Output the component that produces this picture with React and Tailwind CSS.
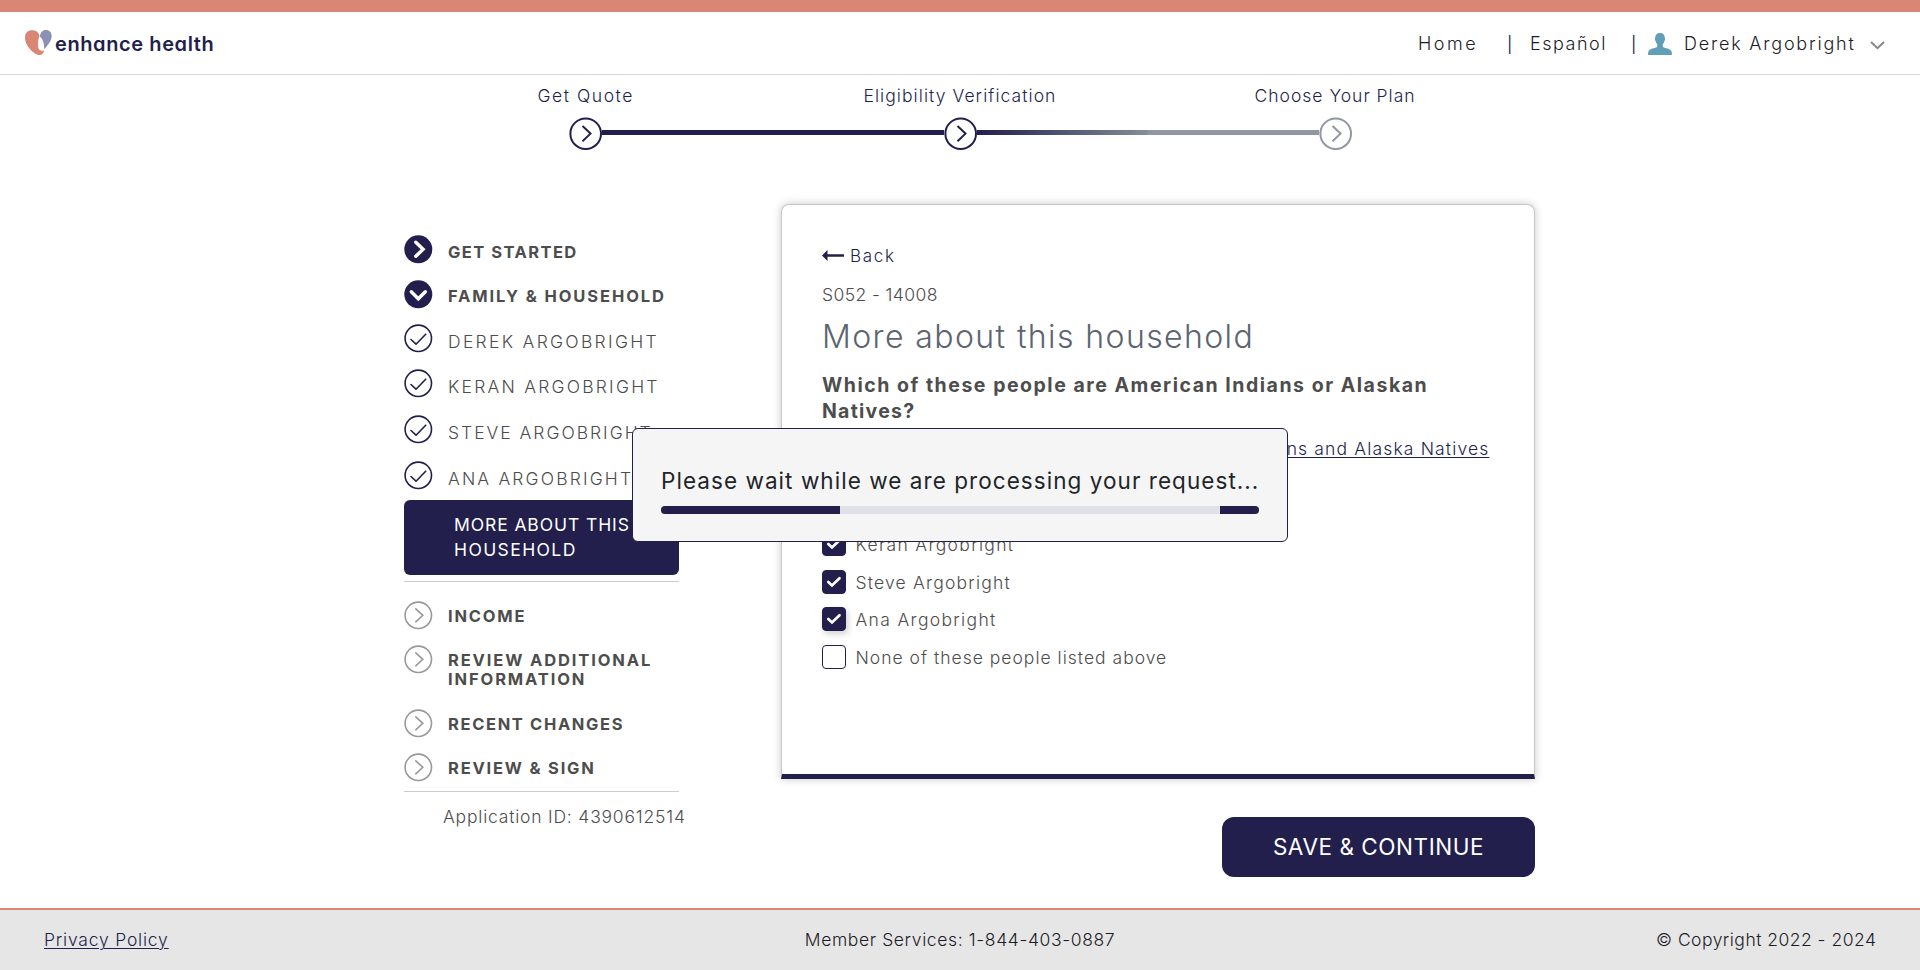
const NAVY = "#221f4d";

function Logo() {
  return (
    <div className="flex items-start">
      <svg width="27" height="25" viewBox="75 90 80 74">
        <path d="M118 107 C115 96 107 91 96 91 C83 91 75 99 75 112 C75 132 92 155 112 163 C122 166 131 162 131 150 C126 153 114 152 114 138 C113 126 115 115 118 107Z" fill="#da8675" />
        <path d="M119 109 C121 97 127 90 137 90 C148 90 154 97 154 108 C154 122 143 135 132 147 C132 130 128 116 119 109Z" fill="#8b90b5" />
      </svg>
      <span className="ml-[3px] mt-[2px] text-[20px] leading-[24px] font-semibold tracking-[0.600px] text-[#221f4d] [font-feature-settings:'cv11']">
        enhance health
      </span>
    </div>
  );
}

function Header() {
  return (
    <header className="flex h-[63px] items-start justify-between border-b border-[#d6d8da] bg-white pl-[25px] pr-[35px] text-[18px] leading-[24px] font-light text-[#1c1c28]">
      <div className="mt-[18px]">
        <Logo />
      </div>
      <nav className="flex pt-[20px]">
        <a className="w-[89px] tracking-[2.500px]">Home</a>
        <span className="w-[23px] text-[16px] text-[#221f4d] font-normal">|</span>
        <a className="w-[101px] tracking-[1.500px]">Español</a>
        <span className="w-[17px] text-[16px] text-[#221f4d] font-normal">|</span>
        <svg className="mt-px" width="24" height="22" viewBox="0 0 24 22" fill="#619fb9">
          <path d="M12 0C8.700 0 7.100 2 7.200 5c-.7.5-.3 2.300.4 3 .3 1.500.9 2.500 1.600 3.200v2.300C9.200 15 3 15.200 1 17.500 0 18.800 0 22 0 22h24s0-3.200-1-4.500C21 15.200 14.800 15 14.800 13.500v-2.300c.7-.7 1.300-1.700 1.600-3.200.7-.7 1.100-2.500.4-3C16.900 2 15.300 0 12 0z" />
        </svg>
        <a className="ml-[12px] w-[186px] tracking-[1.800px]">Derek Argobright</a>
        <svg className="mt-[9px]" width="15" height="9" viewBox="0 0 15 9" fill="none" stroke="#858585" strokeWidth="1.900">
          <path d="M1 1l6.500 6.300L14 1" />
        </svg>
      </nav>
    </header>
  );
}

function StepCircle({ color }) {
  return (
    <svg width="33" height="33" viewBox="0 0 33 33" fill="none" stroke={color} strokeWidth="2">
      <circle cx="16.700" cy="16.700" r="15.300" />
      <path d="M13.500 9l8 7.600-8 7.600" />
    </svg>
  );
}

function Stepper() {
  return (
    <section className="h-[129px] pt-[9px] text-[17.500px] leading-[24px] font-light text-[#221f4d]">
      <div className="flex pl-[537.500px]">
        <span className="w-[326px] tracking-[1.550px]">Get Quote</span>
        <span className="w-[391px] tracking-[1.060px]">Eligibility Verification</span>
        <span className="tracking-[1px]">Choose Your Plan</span>
      </div>
      <div className="mt-[9px] ml-[569px] flex w-[783px] items-start">
        <StepCircle color={NAVY} />
        <div className="mt-[13px] h-[5px] flex-1 bg-[#221f4d]" />
        <StepCircle color={NAVY} />
        <div className="mt-[13px] flex h-[5px] flex-1">
          <div className="w-1/2 bg-linear-to-r from-[#221f4d] to-[#868e96]" />
          <div className="w-1/2 bg-[#9097a3]" />
        </div>
        <StepCircle color="#9097a3" />
      </div>
    </section>
  );
}

function NavIcon({ kind }) {
  const box = { width: 29, height: 29, viewBox: "0 0 29 29", fill: "none", className: "shrink-0" };
  if (kind === "right" || kind === "down") {
    return (
      <svg {...box}>
        <circle cx="14.300" cy="14.300" r="14" fill={NAVY} />
        <path
          d={kind === "right" ? "M11.800 7.300l7.300 7-7.300 7" : "M7.300 11.800l7 7 7-7"}
          stroke="#fff"
          strokeWidth="3.400"
          strokeLinecap="round"
        />
      </svg>
    );
  }
  if (kind === "check") {
    return (
      <svg {...box} stroke={NAVY} strokeWidth="1.600" strokeLinecap="round" strokeLinejoin="round">
        <circle cx="14.300" cy="14.300" r="13.200" />
        <path d="M7 15.500l5 4.700 9.700-10" />
      </svg>
    );
  }
  return (
    <svg {...box} stroke="#999" strokeWidth="1.600" strokeLinecap="round">
      <circle cx="14.300" cy="14.300" r="13.200" />
      <path d="M11.800 7.800l7 6.500-7 6.500" />
    </svg>
  );
}

function NavRow({ kind, className, text, children }) {
  return (
    <div className={`flex items-start ${className}`}>
      <NavIcon kind={kind} />
      <span className={`ml-[15px] whitespace-nowrap leading-[19px] ${text}`}>{children}</span>
    </div>
  );
}

const BOLD = "text-[16.500px] font-bold text-[#4d4d4d]";
const THIN = "text-[17.500px] font-light text-[#4d4d4d]";

function Sidebar() {
  return (
    <aside className="ml-[404px] w-[275px] pt-[31px]">
      <NavRow kind="right" className="h-[45px]" text={`pt-[8px] tracking-[1.450px] ${BOLD}`}>GET STARTED</NavRow>
      <NavRow kind="down" className="h-[44px]" text={`pt-[7px] tracking-[1.900px] ${BOLD}`}>FAMILY &amp; HOUSEHOLD</NavRow>
      <NavRow kind="check" className="h-[45px]" text={`pt-[8px] tracking-[2.300px] ${THIN}`}>DEREK ARGOBRIGHT</NavRow>
      <NavRow kind="check" className="h-[46px]" text={`pt-[8px] tracking-[2.220px] ${THIN}`}>KERAN ARGOBRIGHT</NavRow>
      <NavRow kind="check" className="h-[46px]" text={`pt-[8px] tracking-[1.980px] ${THIN}`}>STEVE ARGOBRIGHT</NavRow>
      <NavRow kind="check" className="h-[39px]" text={`pt-[8px] tracking-[2.150px] ${THIN}`}>ANA ARGOBRIGHT</NavRow>
      <div className="flex h-[75px] flex-col rounded-md bg-[#221f4d] pt-[12px] pl-[50px] text-[17.500px] leading-[25px] text-white">
        <span className="tracking-[0.900px]">MORE ABOUT THIS</span>
        <span className="tracking-[1.400px]">HOUSEHOLD</span>
      </div>
      <div className="mt-[6px] border-t border-[#ccc] pt-[19px]">
        <NavRow kind="todo" className="h-[44px]" text={`pt-[6px] tracking-[1.800px] ${BOLD}`}>INCOME</NavRow>
        <NavRow kind="todo" className="h-[64px]" text={`pt-[6px] tracking-[1.880px] ${BOLD}`}>
          REVIEW ADDITIONAL
          <br />
          INFORMATION
        </NavRow>
        <NavRow kind="todo" className="h-[44px]" text={`pt-[6px] tracking-[1.640px] ${BOLD}`}>RECENT CHANGES</NavRow>
        <NavRow kind="todo" className="h-[38px]" text={`pt-[6px] tracking-[1.800px] ${BOLD}`}>REVIEW &amp; SIGN</NavRow>
      </div>
      <div className="border-t border-[#ccc] pt-[13px] pl-[39px] text-[17.500px] leading-[24px] font-light whitespace-nowrap tracking-[0.800px] text-[#4d4d4d]">
        Application ID: 4390612514
      </div>
    </aside>
  );
}

function CheckRow({ checked, focused, className, children }) {
  return (
    <label className={`flex h-[37.600px] items-start text-[17.500px] leading-[24px] font-light whitespace-nowrap text-[#4d4d4d] ${className}`}>
      <span
        className={`mr-[9.500px] flex size-[24px] shrink-0 items-center justify-center rounded border border-[#221f4d] ${checked ? "bg-[#221f4d]" : "bg-white"} ${focused ? "shadow-[2px_3px_6px_rgba(0,0,0,0.180)]" : ""}`}
      >
        {checked && (
          <svg width="16" height="12" viewBox="0 0 16 12" fill="none" stroke="#fff" strokeWidth="2.700">
            <path d="M2.300 6l3.700 3.500 7.500-7.200" strokeLinecap="round" />
          </svg>
        )}
      </span>
      <span className="pt-[1px]">{children}</span>
    </label>
  );
}

function Card() {
  return (
    <section className="h-[575px] w-[754px] rounded-t-lg border border-b-[5px] border-[#c8c8c8] border-b-[#221f4d] bg-white pl-[40px] shadow-[0_0_8px_rgba(0,0,0,0.220)]">
      <a className="flex items-start pt-[39px] text-[17px] leading-[24px] font-light tracking-[1.700px] text-[#221f4d]">
        <svg className="mt-[6px] mr-[6px]" width="22" height="12" viewBox="0 0 22 12" fill={NAVY}>
          <path d="M0 5.500L5.500 0V4.300H22V6.700H5.500V11Z" />
        </svg>
        Back
      </a>
      <div className="mt-[15px] text-[17.500px] leading-[24px] font-light tracking-[0.400px] text-[#4d4d4d]">S052 - 14008</div>
      <h1 className="mt-[10px] text-[32px] leading-[40px] font-light tracking-[1.400px] text-[#5b6470]">More about this household</h1>
      <h2 className="mt-[15px] text-[19.500px] leading-[26px] font-bold text-[#4d4d4d]">
        <span className="tracking-[1.520px]">Which of these people are American Indians or Alaskan</span>
        <br />
        <span className="tracking-[1.250px]">Natives?</span>
      </h2>
      <div className="mt-[13px] flex justify-end pr-[44.500px] text-[17.500px] leading-[24px] font-light tracking-[1.150px] text-[#221f4d]">
        <a className="underline decoration-1 underline-offset-2">American Indians and Alaska Natives</a>
      </div>
      <div className="mt-[33.400px]">
        <CheckRow checked className="tracking-[1.320px]">Derek Argobright</CheckRow>
        <CheckRow checked className="tracking-[1.320px]">Keran Argobright</CheckRow>
        <CheckRow checked className="tracking-[1.200px]">Steve Argobright</CheckRow>
        <CheckRow checked focused className="tracking-[1.330px]">Ana Argobright</CheckRow>
        <CheckRow className="tracking-[1.010px]">None of these people listed above</CheckRow>
      </div>
    </section>
  );
}

function ProcessingModal() {
  return (
    <div role="dialog" className="absolute top-[428px] left-[632px] h-[114px] w-[656px] rounded-md border border-[#221f4d] bg-[#f5f5f5] px-[28px] pt-[37px]">
      <p className="text-[22.500px] leading-[30px] font-normal whitespace-nowrap tracking-[1.050px] text-[#212529]">
        Please wait while we are processing your request...
      </p>
      <div className="mt-[10px] flex h-[8px] justify-between overflow-hidden rounded bg-[#dee2e6]">
        <div className="w-[179px] bg-[#221f4d]" />
        <div className="w-[39px] bg-[#221f4d]" />
      </div>
    </div>
  );
}

function Footer() {
  return (
    <footer className="flex h-[62px] items-start justify-between border-t-2 border-[#da8675] bg-[#e6e6e6] pt-[18px] pr-[44px] pl-[44px] text-[17.500px] leading-[24px] font-light text-[#1c1c28]">
      <a className="w-[220px] tracking-[0.800px] text-[#221f4d] underline decoration-1 underline-offset-2">Privacy Policy</a>
      <span className="tracking-[0.620px]">Member Services: 1-844-403-0887</span>
      <span className="w-[220px] text-right whitespace-nowrap tracking-[0.480px]">© Copyright 2022 - 2024</span>
    </footer>
  );
}

export default function App() {
  return (
    <div className="relative flex h-[970px] w-[1920px] flex-col overflow-hidden bg-white font-['Inter',sans-serif]">
      <div className="h-[12px] bg-[#da8675]" />
      <Header />
      <Stepper />
      <main className="flex flex-1 items-start">
        <Sidebar />
        <div className="ml-[102px] flex flex-col items-end">
          <Card />
          <button className="mt-[38px] h-[60px] w-[313px] rounded-xl bg-[#221f4d] text-[22.500px] font-normal tracking-[0.550px] text-white">
            SAVE &amp; CONTINUE
          </button>
        </div>
      </main>
      <Footer />
      <ProcessingModal />
    </div>
  );
}
